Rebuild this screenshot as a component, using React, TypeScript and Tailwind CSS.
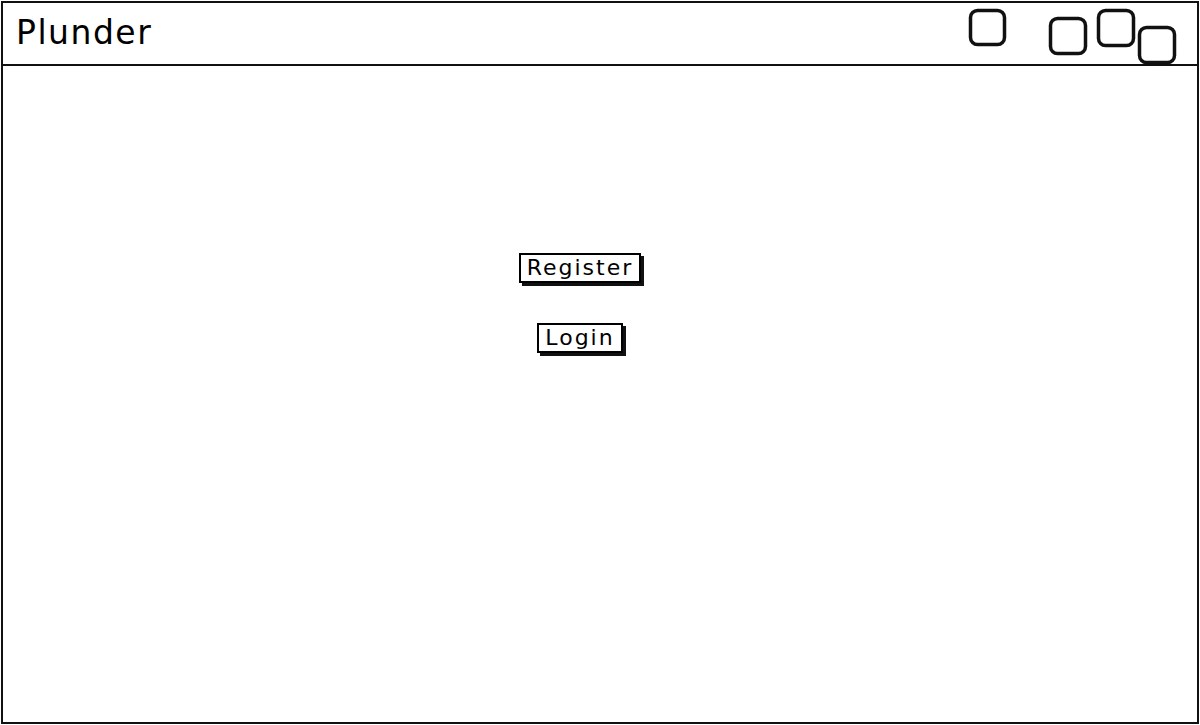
const SketchButton = ({ label }: { label: string }) => (
  <button className="border-2 border-black bg-white px-[6px] text-[22px] leading-[26px] tracking-[2px] text-black shadow-[3px_3px_0_#111]">
    {label}
  </button>
);

const WindowIcons = () => (
  <svg width="220" height="64" viewBox="0 0 220 64" fill="none" stroke="#111" strokeWidth="3.5">
    <rect x="11.5" y="8.5" width="34" height="34" rx="7" />
    <rect x="91.5" y="16.5" width="35" height="35" rx="7" />
    <rect x="139.5" y="8.5" width="35" height="35" rx="7" />
    <rect x="180.5" y="25.5" width="35" height="35" rx="7" />
  </svg>
);

export default function App() {
  return (
    <div
      className="flex h-[725px] w-[1200px] flex-col bg-white p-[1px] text-black"
      style={{ fontFamily: '"DejaVu Sans", "Noto Sans", sans-serif' }}
    >
      <div className="flex h-full flex-col border-2 border-[#111]">
        <header className="flex h-[63px] shrink-0 items-start justify-between border-b-2 border-[#111]">
          <h1 className="pl-[13px] pt-[8px] text-[33px] leading-[44px] tracking-[1.5px]">Plunder</h1>
          <div className="-mt-[1px] pr-[18px]">
            <WindowIcons />
          </div>
        </header>
        <main className="flex flex-1 flex-col items-center gap-[40px] pr-[40px] pt-[187px]">
          <SketchButton label="Register" />
          <SketchButton label="Login" />
        </main>
      </div>
    </div>
  );
}
